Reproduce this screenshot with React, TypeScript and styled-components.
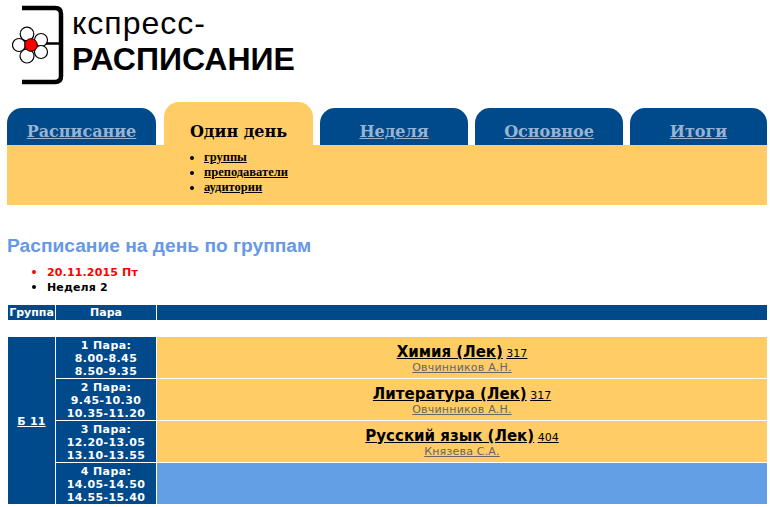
import styled, { createGlobalStyle } from "styled-components";

const NAVY = "#004a8c";
const SAND = "#ffcc66";
const SKY = "#639fe5";

const tabs = [
  { label: "Расписание", width: 149 },
  { label: "Один день", width: 149, active: true },
  { label: "Неделя", width: 148 },
  { label: "Основное", width: 148 },
  { label: "Итоги", width: 137 },
];

const pairs = [
  { n: 1, a: "8.00-8.45", b: "8.50-9.35", subject: "Химия (Лек)", room: "317", teacher: "Овчинников А.Н." },
  { n: 2, a: "9.45-10.30", b: "10.35-11.20", subject: "Литература (Лек)", room: "317", teacher: "Овчинников А.Н." },
  { n: 3, a: "12.20-13.05", b: "13.10-13.55", subject: "Русский язык (Лек)", room: "404", teacher: "Князева С.А." },
  { n: 4, a: "14.05-14.50", b: "14.55-15.40" },
];

const App = () => {
  return (
    <Page>
      <GlobalStyle />
      <Logo>
        <svg width="54" height="80" viewBox="0 0 54 80">
          <path
            d="M10 3H43Q49 3 49 9V71Q49 77 43 77H10"
            fill="none"
            stroke="#000"
            strokeWidth="4.5"
          />
          <path d="M26 38.5H49" fill="none" stroke="#000" strokeWidth="2.5" />
          <g fill="#fff" stroke="#000" strokeWidth="1.2">
            <circle cx="7" cy="40" r="6.5" />
            <circle cx="15" cy="29" r="6.8" />
            <circle cx="29" cy="35" r="6.5" />
            <circle cx="29" cy="47" r="6.5" />
            <circle cx="15" cy="51" r="7" />
          </g>
          <circle cx="19" cy="40" r="6.3" fill="#f00" stroke="#000" strokeWidth="1" />
        </svg>
        <LogoText>
          <LogoTop>кспресс-</LogoTop>
          <LogoBottom>РАСПИСАНИЕ</LogoBottom>
        </LogoText>
      </Logo>

      <TabRow>
        {tabs.map((tab) => (
          <Tab key={tab.label} $active={tab.active} $width={tab.width}>
            {tab.active ? tab.label : <a href="#">{tab.label}</a>}
          </Tab>
        ))}
      </TabRow>
      <SubPanel>
        <SubMenu>
          <li><a href="#">группы</a></li>
          <li><a href="#">преподаватели</a></li>
          <li><a href="#">аудитории</a></li>
        </SubMenu>
      </SubPanel>

      <Title>Расписание на день по группам</Title>
      <DateList>
        <DateItem $red>20.11.2015 Пт</DateItem>
        <DateItem>Неделя 2</DateItem>
      </DateList>

      <Schedule>
        <thead>
          <tr>
            <HeadCell $width={47}>Группа</HeadCell>
            <HeadCell $width={100}>Пара</HeadCell>
            <HeadCell />
          </tr>
        </thead>
        <tbody>
          <tr>
            <SpacerCell colSpan={3} />
          </tr>
          {pairs.map((p, i) => (
            <tr key={p.n}>
              {i === 0 && (
                <GroupCell rowSpan={4}>
                  <a href="#">Б 11</a>
                </GroupCell>
              )}
              <TimeCell>
                {p.n} Пара:
                <br />
                {p.a}
                <br />
                {p.b}
              </TimeCell>
              {p.subject ? (
                <LessonCell>
                  <Subject href="#">{p.subject}</Subject> <Room href="#">{p.room}</Room>
                  <br />
                  <Teacher href="#">{p.teacher}</Teacher>
                </LessonCell>
              ) : (
                <EmptyCell />
              )}
            </tr>
          ))}
        </tbody>
      </Schedule>
    </Page>
  );
};

export default App;

const GlobalStyle = createGlobalStyle`
  html, body {
    margin: 0;
    padding: 0;
    background: #fff;
  }
  body {
    font-family: "DejaVu Sans", Verdana, sans-serif;
    overflow: hidden;
  }
`;

const Page = styled.div`
  width: 770px;
  height: 507px;
  padding: 0 3px 0 7px;
  box-sizing: border-box;
  overflow: hidden;
`;

const Logo = styled.div`
  display: flex;
  height: 102px;
  padding: 5px 0 0 5px;
  box-sizing: border-box;
  svg {
    flex: none;
  }
`;

const LogoText = styled.div`
  display: flex;
  flex-direction: column;
  margin-left: 6px;
  color: #000;
  font-family: "Liberation Sans", Arial, sans-serif;
`;

const LogoTop = styled.div`
  font-size: 32px;
  line-height: 30px;
  margin-top: 3px;
  letter-spacing: 1px;
`;

const LogoBottom = styled.div`
  font-size: 32px;
  font-weight: 700;
  line-height: 36px;
  margin-top: 3px;
`;

const TabRow = styled.div`
  display: flex;
  align-items: flex-end;
  gap: 7px;
  height: 43px;
`;

const Tab = styled.div<{ $active?: boolean; $width: number }>`
  width: ${(p) => p.$width}px;
  height: ${(p) => (p.$active ? 43 : 37)}px;
  padding-top: ${(p) => (p.$active ? 19 : 13)}px;
  box-sizing: border-box;
  flex: none;
  margin-left: ${(p) => (p.$active ? 1 : 0)}px;
  text-align: center;
  border-radius: 15px 15px 0 0;
  background: ${(p) => (p.$active ? SAND : NAVY)};
  color: #000;
  font-family: "DejaVu Serif", Georgia, serif;
  font-size: 16px;
  font-weight: 700;
  line-height: 22px;
  a {
    color: #99b3d1;
  }
`;

const SubPanel = styled.div`
  height: 60px;
  background: ${SAND};
  padding: 5px 0 0 197px;
  box-sizing: border-box;
`;

const SubMenu = styled.ul`
  margin: 0;
  padding: 0;
  list-style: disc;
  font-family: "Liberation Serif", "Times New Roman", serif;
  font-size: 12.5px;
  font-weight: 700;
  line-height: 15px;
  li {
    margin: 0;
  }
  a {
    color: #000;
  }
`;

const Title = styled.h1`
  margin: 30px 0 0 0;
  color: #6699e5;
  font-family: "Liberation Sans", Arial, sans-serif;
  font-size: 19.2px;
  font-weight: 700;
  line-height: 21px;
`;

const DateList = styled.ul`
  margin: 8px 0 0 0;
  padding: 0 0 0 40px;
  font-size: 11px;
  font-weight: 700;
  line-height: 15px;
  letter-spacing: 0.15px;
  li::marker {
    font-size: 13px;
  }
`;

const DateItem = styled.li<{ $red?: boolean }>`
  height: 15px;
  color: ${(p) => (p.$red ? "#f00" : "#000")};
`;

const Schedule = styled.table`
  width: 759px;
  margin: 11px 0 0 1px;
  border-collapse: separate;
  border-spacing: 0;
  table-layout: fixed;
  font-size: 11px;
  font-weight: 700;
  color: #fff;
  a {
    color: inherit;
  }
`;

const HeadCell = styled.th<{ $width?: number }>`
  ${(p) => (p.$width ? `width: ${p.$width + 1}px;` : "")}
  height: 15px;
  padding: 0;
  box-sizing: border-box;
  background: ${NAVY};
  border-right: 1px solid #fff;
  font-size: 11px;
  line-height: 15px;
  &:last-child {
    border-right: 0;
  }
`;

const SpacerCell = styled.td`
  height: 17px;
  padding: 0;
`;

const GroupCell = styled.td`
  padding: 2px 0 0;
  background: ${NAVY};
  border-right: 1px solid #fff;
  text-align: center;
  letter-spacing: 0.2px;
`;

const TimeCell = styled.td`
  height: 42px;
  padding: 1px 0 0;
  box-sizing: border-box;
  background: ${NAVY};
  border-right: 1px solid #fff;
  border-bottom: 1px solid #fff;
  text-align: center;
  line-height: 13px;
  letter-spacing: 0.4px;
  tr:last-child & {
    border-bottom: 0;
    height: 41px;
  }
`;

const LessonCell = styled.td`
  padding: 2px 0 0;
  background: ${SAND};
  border-bottom: 1px solid #fff;
  text-align: center;
  color: #000;
  line-height: 13px;
  font-weight: 400;
`;

const EmptyCell = styled.td`
  padding: 0;
  background: ${SKY};
`;

const Subject = styled.a`
  font-size: 15px;
  font-weight: 700;
  line-height: 17px;
`;

const Room = styled.a`
  font-size: 11px;
  font-weight: 400;
`;

const Teacher = styled.a`
  && {
    color: #666;
  }
  font-size: 11px;
  font-weight: 400;
  letter-spacing: 0.2px;
`;
